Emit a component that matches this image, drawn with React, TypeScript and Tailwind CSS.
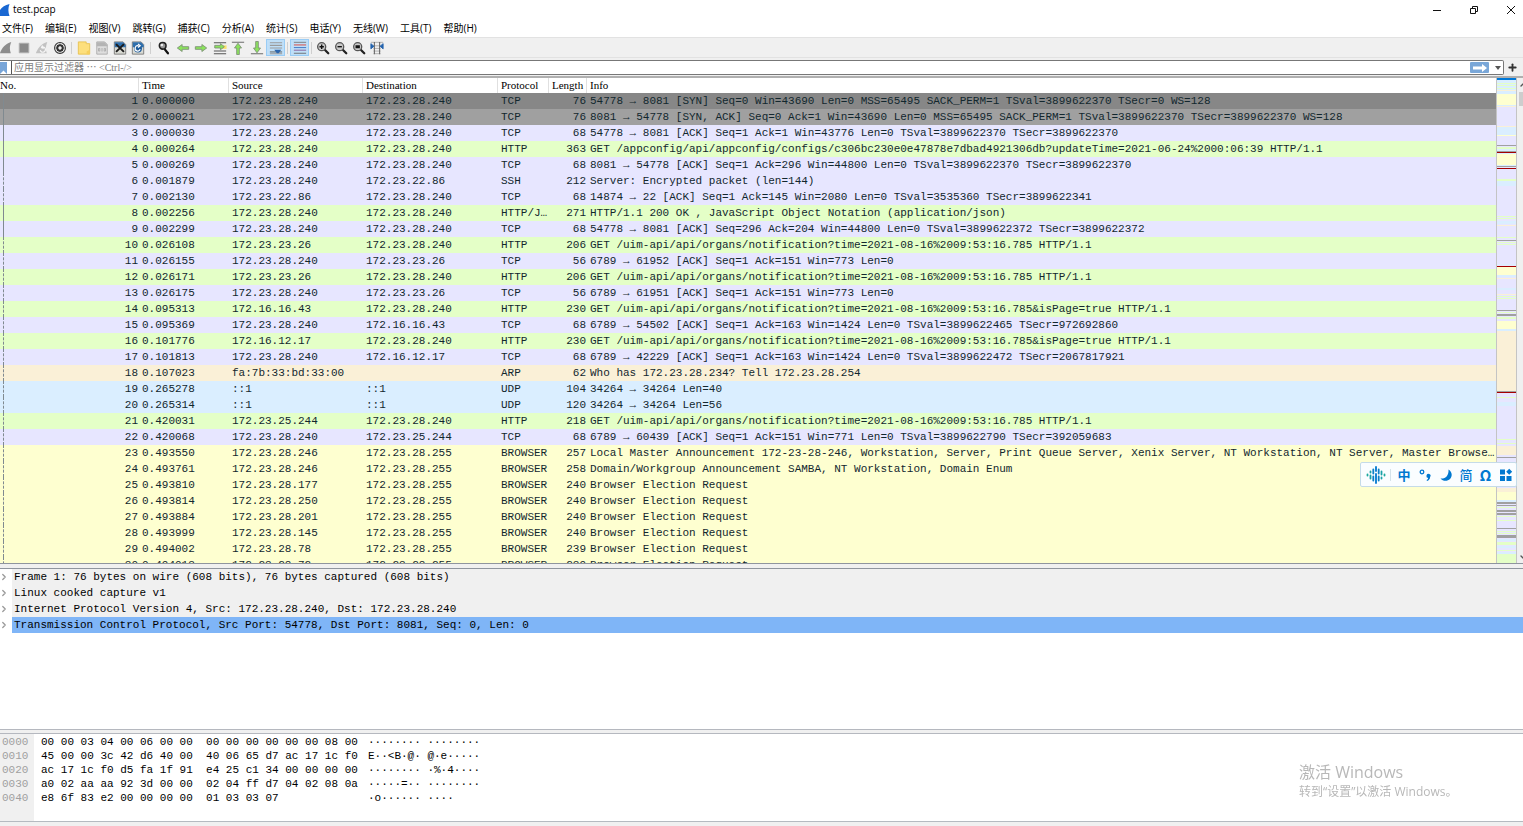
import type { ReactNode } from "react";
import { ChevronDown, ChevronRight, ChevronUp, Plus } from "lucide-react";

const MENUS = [
  "文件(F)",
  "编辑(E)",
  "视图(V)",
  "跳转(G)",
  "捕获(C)",
  "分析(A)",
  "统计(S)",
  "电话(Y)",
  "无线(W)",
  "工具(T)",
  "帮助(H)",
];

const ROW_BG = {
  selected: "bg-[#878787]",
  syn: "bg-[#a0a0a0]",
  tcp: "bg-[#e7e6ff]",
  http: "bg-[#e4ffc7]",
  arp: "bg-[#faf0d7]",
  udp: "bg-[#daeeff]",
  smb: "bg-[#feffd0]",
};

type Kind = keyof typeof ROW_BG;
type Packet = [Kind, string, string, string, string, number, string];

const PACKETS: Packet[] = [
  ["selected", "0.000000", "172.23.28.240", "172.23.28.240", "TCP", 76, "54778 → 8081 [SYN] Seq=0 Win=43690 Len=0 MSS=65495 SACK_PERM=1 TSval=3899622370 TSecr=0 WS=128"],
  ["syn", "0.000021", "172.23.28.240", "172.23.28.240", "TCP", 76, "8081 → 54778 [SYN, ACK] Seq=0 Ack=1 Win=43690 Len=0 MSS=65495 SACK_PERM=1 TSval=3899622370 TSecr=3899622370 WS=128"],
  ["tcp", "0.000030", "172.23.28.240", "172.23.28.240", "TCP", 68, "54778 → 8081 [ACK] Seq=1 Ack=1 Win=43776 Len=0 TSval=3899622370 TSecr=3899622370"],
  ["http", "0.000264", "172.23.28.240", "172.23.28.240", "HTTP", 363, "GET /appconfig/api/appconfig/configs/c306bc230e0e47878e7dbad4921306db?updateTime=2021-06-24%2000:06:39 HTTP/1.1"],
  ["tcp", "0.000269", "172.23.28.240", "172.23.28.240", "TCP", 68, "8081 → 54778 [ACK] Seq=1 Ack=296 Win=44800 Len=0 TSval=3899622370 TSecr=3899622370"],
  ["tcp", "0.001879", "172.23.28.240", "172.23.22.86", "SSH", 212, "Server: Encrypted packet (len=144)"],
  ["tcp", "0.002130", "172.23.22.86", "172.23.28.240", "TCP", 68, "14874 → 22 [ACK] Seq=1 Ack=145 Win=2080 Len=0 TSval=3535360 TSecr=3899622341"],
  ["http", "0.002256", "172.23.28.240", "172.23.28.240", "HTTP/J…", 271, "HTTP/1.1 200 OK , JavaScript Object Notation (application/json)"],
  ["tcp", "0.002299", "172.23.28.240", "172.23.28.240", "TCP", 68, "54778 → 8081 [ACK] Seq=296 Ack=204 Win=44800 Len=0 TSval=3899622372 TSecr=3899622372"],
  ["http", "0.026108", "172.23.23.26", "172.23.28.240", "HTTP", 206, "GET /uim-api/api/organs/notification?time=2021-08-16%2009:53:16.785 HTTP/1.1"],
  ["tcp", "0.026155", "172.23.28.240", "172.23.23.26", "TCP", 56, "6789 → 61952 [ACK] Seq=1 Ack=151 Win=773 Len=0"],
  ["http", "0.026171", "172.23.23.26", "172.23.28.240", "HTTP", 206, "GET /uim-api/api/organs/notification?time=2021-08-16%2009:53:16.785 HTTP/1.1"],
  ["tcp", "0.026175", "172.23.28.240", "172.23.23.26", "TCP", 56, "6789 → 61951 [ACK] Seq=1 Ack=151 Win=773 Len=0"],
  ["http", "0.095313", "172.16.16.43", "172.23.28.240", "HTTP", 230, "GET /uim-api/api/organs/notification?time=2021-08-16%2009:53:16.785&isPage=true HTTP/1.1"],
  ["tcp", "0.095369", "172.23.28.240", "172.16.16.43", "TCP", 68, "6789 → 54502 [ACK] Seq=1 Ack=163 Win=1424 Len=0 TSval=3899622465 TSecr=972692860"],
  ["http", "0.101776", "172.16.12.17", "172.23.28.240", "HTTP", 230, "GET /uim-api/api/organs/notification?time=2021-08-16%2009:53:16.785&isPage=true HTTP/1.1"],
  ["tcp", "0.101813", "172.23.28.240", "172.16.12.17", "TCP", 68, "6789 → 42229 [ACK] Seq=1 Ack=163 Win=1424 Len=0 TSval=3899622472 TSecr=2067817921"],
  ["arp", "0.107023", "fa:7b:33:bd:33:00", "", "ARP", 62, "Who has 172.23.28.234? Tell 172.23.28.254"],
  ["udp", "0.265278", "::1", "::1", "UDP", 104, "34264 → 34264 Len=40"],
  ["udp", "0.265314", "::1", "::1", "UDP", 120, "34264 → 34264 Len=56"],
  ["http", "0.420031", "172.23.25.244", "172.23.28.240", "HTTP", 218, "GET /uim-api/api/organs/notification?time=2021-08-16%2009:53:16.785 HTTP/1.1"],
  ["tcp", "0.420068", "172.23.28.240", "172.23.25.244", "TCP", 68, "6789 → 60439 [ACK] Seq=1 Ack=151 Win=771 Len=0 TSval=3899622790 TSecr=392059683"],
  ["smb", "0.493550", "172.23.28.246", "172.23.28.255", "BROWSER", 257, "Local Master Announcement 172-23-28-246, Workstation, Server, Print Queue Server, Xenix Server, NT Workstation, NT Server, Master Browser, D…"],
  ["smb", "0.493761", "172.23.28.246", "172.23.28.255", "BROWSER", 258, "Domain/Workgroup Announcement SAMBA, NT Workstation, Domain Enum"],
  ["smb", "0.493810", "172.23.28.177", "172.23.28.255", "BROWSER", 240, "Browser Election Request"],
  ["smb", "0.493814", "172.23.28.250", "172.23.28.255", "BROWSER", 240, "Browser Election Request"],
  ["smb", "0.493884", "172.23.28.201", "172.23.28.255", "BROWSER", 240, "Browser Election Request"],
  ["smb", "0.493999", "172.23.28.145", "172.23.28.255", "BROWSER", 240, "Browser Election Request"],
  ["smb", "0.494002", "172.23.28.78", "172.23.28.255", "BROWSER", 239, "Browser Election Request"],
  ["smb", "0.494013", "172.23.28.72", "172.23.28.255", "BROWSER", 239, "Browser Election Request"],
];

// packets that belong to the selected conversation get a solid guide line
const isRelated = (no: number) => no <= 5 || no === 8 || no === 9;

const DETAILS = [
  "Frame 1: 76 bytes on wire (608 bits), 76 bytes captured (608 bits)",
  "Linux cooked capture v1",
  "Internet Protocol Version 4, Src: 172.23.28.240, Dst: 172.23.28.240",
  "Transmission Control Protocol, Src Port: 54778, Dst Port: 8081, Seq: 0, Len: 0",
];

const HEX = [
  ["0000", "00 00 03 04 00 06 00 00  00 00 00 00 00 00 08 00", "········ ········"],
  ["0010", "45 00 00 3c 42 d6 40 00  40 06 65 d7 ac 17 1c f0", "E··<B·@· @·e·····"],
  ["0020", "ac 17 1c f0 d5 fa 1f 91  e4 25 c1 34 00 00 00 00", "········ ·%·4····"],
  ["0030", "a0 02 aa aa 92 3d 00 00  02 04 ff d7 04 02 08 0a", "·····=·· ········"],
  ["0040", "e8 6f 83 e2 00 00 00 00  01 03 03 07", "·o······ ····"],
];

const GREEN = "#e4ffc7";
const BLUE = "#daeeff";
const YELLOW = "#feffd0";
const PEACH = "#faf0d7";
const GRAY = "#a0a0a0";
const RED = "#a40000";

// [y, height, colour] on the lavender base of the overview bar
const STRIPES: [number, number, string][] = [
  [0, 2, "#0078d7"], [2, 14, BLUE], [5, 1, GREEN], [7, 1, GREEN], [10, 1, GREEN], [12, 1, PEACH],
  [16, 11, YELLOW], [27, 1, BLUE], [28, 1, PEACH], [48, 1, PEACH], [49, 8, BLUE], [57, 1, YELLOW],
  [67, 1, GRAY], [69, 2, GREEN], [71, 2, BLUE], [73, 1, GRAY], [74, 1, RED], [75, 1, BLUE],
  [76, 11, YELLOW], [87, 1, BLUE], [88, 1, GRAY], [90, 1, RED], [101, 2, GREEN], [103, 5, BLUE],
  [138, 1, GREEN], [140, 1, GREEN], [143, 3, BLUE], [147, 1, PEACH], [159, 1, GREEN], [162, 1, GRAY],
  [164, 1, GREEN], [166, 1, GREEN], [186, 1, BLUE], [188, 1, RED], [189, 8, YELLOW], [197, 2, BLUE],
  [200, 1, PEACH], [210, 2, BLUE], [216, 1, PEACH], [218, 1, GREEN], [220, 1, GREEN], [232, 1, GRAY],
  [234, 1, GREEN], [236, 2, GRAY], [239, 2, GREEN], [243, 8, YELLOW], [251, 2, BLUE], [253, 60, PEACH],
  [313, 1, GRAY], [314, 1, RED], [319, 1, GREEN], [324, 4, BLUE], [361, 1, GREEN], [365, 1, GREEN],
  [368, 9, PEACH], [379, 1, GRAY], [384, 25, BLUE], [410, 4, PEACH], [414, 8, YELLOW], [422, 2, BLUE],
  [424, 2, GRAY], [427, 1, GRAY], [429, 1, GREEN], [432, 2, GRAY], [435, 2, GRAY],
  [438, 1, GREEN], [442, 1, GREEN], [450, 1, GRAY], [453, 1, GREEN], [455, 1, GREEN], [457, 3, GRAY],
  [461, 2, BLUE], [464, 3, GREEN], [468, 2, BLUE], [472, 1, GREEN], [474, 2, BLUE], [476, 9, GREEN],
];

function Icon({ children }: { children: ReactNode }) {
  return (
    <svg viewBox="0 0 16 16" className="block h-[14px] w-[14px] shrink-0" fill="none">
      {children}
    </svg>
  );
}

function Lens({ children }: { children?: ReactNode }) {
  return (
    <Icon>
      <path d="M10 10l4 4" stroke="#222" strokeWidth="2.6" strokeLinecap="round" />
      <circle cx="6.5" cy="6.5" r="4.6" fill="#c9c9c9" stroke="#555" strokeWidth="1.5" />
      <g stroke="#111" strokeWidth="1.6">{children}</g>
    </Icon>
  );
}

function Arrow({ turn }: { turn?: string }) {
  return (
    <path
      d="M1.5 8L7 4v2.5h7.5v3H7V12z"
      fill="#8be35c"
      stroke="#7d8f76"
      strokeWidth="1"
      transform={turn}
    />
  );
}

function Doc({ children }: { children: ReactNode }) {
  return (
    <Icon>
      <path d="M1.5 1h10l3 3v11h-13z" fill="#d9dad3" stroke="#777" />
      <path d="M2 1.5h9.5l3 3V7H2z" fill="#2f6fad" />
      {children}
    </Icon>
  );
}

function ToolButton({ label, active, children }: { label: string; active?: boolean; children: ReactNode }) {
  return (
    <button
      aria-label={label}
      className={
        active
          ? "flex h-[17px] w-[19px] items-center justify-center border border-[#99ccf5] bg-[#bfdff8]"
          : "flex h-[17px] w-[18px] items-center justify-center"
      }
    >
      {children}
    </button>
  );
}

function Separator() {
  return <span className="h-3 w-px bg-[#cfcfcf]" />;
}

function Toolbar() {
  return (
    <div className="flex h-[21px] shrink-0 items-center border-y border-[#e2e2e2] bg-[#f0f0f0]">
      <div className="-ml-[3px] mr-[2px] flex">
        <ToolButton label="开始">
          <Icon><path d="M1 14C3 8 7 3 14 1c-2 5-2 9-.5 13z" fill="#8c8c8c" /></Icon>
        </ToolButton>
        <ToolButton label="停止">
          <Icon><path d="M2.5 2.5h11v11h-11z" fill="#8a8a8a" stroke="#b5b5b5" /></Icon>
        </ToolButton>
        <ToolButton label="重新开始">
          <Icon>
            <path d="M1 14C3 8 7 3 14 1c-2 5-2 9-.5 13z" fill="#c2c2c2" />
            <path d="M6 10.5a3 3 0 1 0 2-3.5M8.5 5L7.5 7.5l2.5 1" stroke="#f5f5f5" strokeWidth="1.4" />
          </Icon>
        </ToolButton>
        <ToolButton label="捕获选项">
          <Icon>
            <circle cx="8" cy="8" r="6.2" fill="#eee" stroke="#333" strokeWidth="1.2" />
            <circle cx="8" cy="8" r="3.2" stroke="#333" strokeWidth="2" />
            <path d="M8 3v10M3 8h10M4.5 4.5l7 7M11.5 4.5l-7 7" stroke="#333" />
            <circle cx="8" cy="8" r="1.6" fill="#eee" />
          </Icon>
        </ToolButton>
      </div>
      <Separator />
      <div className="mx-[3px] flex">
        <ToolButton label="打开">
          <Icon>
            <path d="M1.5 1h9v2h4v12h-13z" fill="#fddf7c" stroke="#e8c14e" />
            <path d="M11 12l3.500-2v5H11z" fill="#f7cf5c" />
          </Icon>
        </ToolButton>
        <ToolButton label="保存">
          <Icon>
            <path d="M2 1h9l3 3v11H2z" fill="#dedede" stroke="#aaa" />
            <path d="M2 1.5h9l3 3V6H2z" fill="#b4b4b4" />
            <path d="M4 8.5h1.5v3H4zM8 8v4M10.5 8.5H12v3h-1.5z" stroke="#aaa" />
          </Icon>
        </ToolButton>
        <ToolButton label="关闭">
          <Doc><path d="M3.5 3.5l9 9M12.5 3.5l-9 9" stroke="#1c1c1c" strokeWidth="2.2" /></Doc>
        </ToolButton>
        <ToolButton label="重新加载">
          <Doc>
            <circle cx="8" cy="8.5" r="4.5" fill="#1e5c9c" />
            <path d="M10.5 9.5A3 3 0 1 1 8.5 5.5M8 3.5l2.5 2L8 7.500" stroke="#fff" strokeWidth="1.4" />
          </Doc>
        </ToolButton>
      </div>
      <Separator />
      <div className="mr-[2px] ml-[4px] flex w-[130px] justify-between">
        <ToolButton label="查找">
          <Icon>
            <path d="M8.5 9l4 5" stroke="#111" strokeWidth="2.6" strokeLinecap="round" />
            <circle cx="6.5" cy="5.5" r="3.8" fill="#999" stroke="#222" strokeWidth="1.8" />
            <circle cx="5.5" cy="4.5" r="1.5" fill="#eee" />
          </Icon>
        </ToolButton>
        <ToolButton label="后退"><Icon><Arrow /></Icon></ToolButton>
        <ToolButton label="前进"><Icon><Arrow turn="rotate(180 8 8)" /></Icon></ToolButton>
        <ToolButton label="转到分组">
          <Icon>
            <path d="M1 2h14M1 11.5h14M1 14.5h14" stroke="#555" strokeWidth="1.2" />
            <path d="M10 5h5.5v4H10z" fill="#f8e26c" />
            <path d="M13 6.5L8.5 3v2H2v3h6.5v2z" fill="#8be35c" stroke="#7d8f76" />
          </Icon>
        </ToolButton>
        <ToolButton label="首个分组">
          <Icon>
            <path d="M1 1.5h14" stroke="#8a8a8a" strokeWidth="1.5" />
            <Arrow turn="translate(0 1) rotate(90 8 8)" />
          </Icon>
        </ToolButton>
        <ToolButton label="末个分组">
          <Icon>
            <Arrow turn="translate(0 -1) rotate(270 8 8)" />
            <path d="M1 14.5h14" stroke="#8a8a8a" strokeWidth="1.5" />
          </Icon>
        </ToolButton>
        <ToolButton label="自动滚动" active>
          <Icon>
            <path d="M1 2h14M1 5h14M1 8h14M1 14.5h14" stroke="#9a9a9a" strokeWidth="1.2" />
            <path d="M1 12.5h14" stroke="#555" />
            <path d="M6 10h8l-3 4H9z" fill="#2c66ad" />
          </Icon>
        </ToolButton>
      </div>
      <Separator />
      <div className="mx-[2px] flex">
        <ToolButton label="着色" active>
          <Icon>
            <path d="M1 1.5h14" stroke="#777" />
            <path d="M1 4.5h14" stroke="#d9534f" strokeWidth="1.2" />
            <path d="M1 7.5h14" stroke="#4a7fc8" strokeWidth="1.2" />
            <path d="M1 10.5h14" stroke="#8e6aa5" strokeWidth="1.2" />
            <path d="M1 14h14" stroke="#666" />
          </Icon>
        </ToolButton>
      </div>
      <Separator />
      <div className="ml-[2px] flex">
        <ToolButton label="放大"><Lens><path d="M4 6.5h5M6.5 4v5" /></Lens></ToolButton>
        <ToolButton label="缩小"><Lens><path d="M4 6.5h5" /></Lens></ToolButton>
        <ToolButton label="正常大小"><Lens><path d="M4 5.7h5M4 7.4h5" /></Lens></ToolButton>
        <ToolButton label="调整列宽">
          <Icon>
            <path d="M1 1.5h14M4 5.5h8M4 8.5h8M4 11.5h8M4 14.5h8" stroke="#aaa" />
            <path d="M5 1v14M11 1v14" stroke="#666" strokeWidth="1.2" />
            <path d="M1 3v6l3.5-3zM15 3v6l-3.5-3z" fill="#2463ad" stroke="#2463ad" />
          </Icon>
        </ToolButton>
      </div>
    </div>
  );
}

function FilterBar() {
  return (
    <div className="flex h-[18px] shrink-0 items-center bg-[#f0f0f0] pt-[1px]">
      <div className="flex h-[15px] flex-1 items-center rounded-r-[2px] border border-l-0 border-[#777] bg-white">
        <button aria-label="书签" className="flex h-full w-[11px] shrink-0 items-center">
          <svg viewBox="0 0 8 12" className="block h-3 w-2">
            <path d="M0 0h7v12L3.5 8.5 0 12z" fill="#78a5d8" />
          </svg>
        </button>
        <input
          aria-label="显示过滤器"
          placeholder="应用显示过滤器 ⋯ <Ctrl-/>"
          className="h-full min-w-0 flex-1 border-l border-[#555] pl-[2px] font-['Liberation_Serif','Noto_Sans_CJK_SC',serif] text-[10px] outline-none placeholder:text-[#808080]"
        />
        <button aria-label="应用" className="flex h-[11px] w-[19px] items-center justify-center rounded-[1px] bg-[#7aa7d8]">
          <svg viewBox="0 0 14 8" className="block h-2 w-[14px]">
            <path d="M0 2.5h9V0l5 4-5 4V5.5H0z" fill="#fff" />
          </svg>
        </button>
        <button aria-label="历史" className="flex w-[14px] justify-center pl-[3px]">
          <svg viewBox="0 0 6 4" className="block h-1 w-[6px]">
            <path d="M0 0h6L3 4z" fill="#555" />
          </svg>
        </button>
      </div>
      <button aria-label="添加" className="flex w-[19px] justify-start pl-[3px] text-[#333]">
        <Plus size={11} strokeWidth={4} />
      </button>
    </div>
  );
}

function PacketTable() {
  const cell = "truncate p-0 pl-[3px]";
  const head = "border-r border-[#e0e0e0] p-0 pl-[3px] text-left font-normal";
  return (
    <table className="w-full table-fixed border-separate border-spacing-0 text-[11px] leading-4 text-[#12272e]">
      <colgroup>
        <col className="w-[139px]" />
        <col className="w-[90px]" />
        <col className="w-[134px]" />
        <col className="w-[135px]" />
        <col className="w-[51px]" />
        <col className="w-[38px]" />
        <col />
      </colgroup>
      <thead className="bg-white font-['Liberation_Serif',serif] text-[11px] leading-[15px] text-black">
        <tr>
          <th className="border-r border-[#e0e0e0] p-0 text-left font-normal">No.</th>
          <th className={head}>Time</th>
          <th className={head}>Source</th>
          <th className={head}>Destination</th>
          <th className={head}>Protocol</th>
          <th className={head}>Length</th>
          <th className="p-0 pl-[3px] text-left font-normal">Info</th>
        </tr>
      </thead>
      <tbody>
        {PACKETS.map(([kind, time, src, dst, proto, len, info], i) => (
          <tr key={i} className={ROW_BG[kind]}>
            <td className="p-0">
              <div className="flex h-4 justify-between pr-px pl-[3px]">
                <span className={isRelated(i + 1) ? "border-l border-[#808a90]" : "border-l border-dashed border-[#808a90]"} />
                {i + 1}
              </div>
            </td>
            <td className={cell}>{time}</td>
            <td className={cell}>{src}</td>
            <td className={cell}>{dst}</td>
            <td className="p-0 pl-[3px] whitespace-nowrap">{proto}</td>
            <td className="p-0 pr-px text-right">{len}</td>
            <td className={cell}>{info}</td>
          </tr>
        ))}
      </tbody>
    </table>
  );
}

function ImeBar() {
  return (
    <div className="fixed top-[462px] right-[6px] flex h-[25px] w-[157px] items-center rounded-[2px] border border-[#c5dbe8] bg-[#fafdff] pl-[5px] font-['Noto_Sans_CJK_SC',sans-serif] text-[13px] font-bold text-[#0078d0]">
      <svg viewBox="0 0 20 18" className="mr-[4px] block h-[18px] w-5" strokeWidth="1.8" strokeLinecap="round">
        <path d="M1.5 8.500v1M18.500 8.500v1" stroke="#1aa89c" />
        <path d="M4.500 5.500v1M4.500 9.500v3M15.500 5.500v3M15.500 11.500v1" stroke="#1aa0a8" />
        <path d="M7.300 3.500v4M7.300 10.500v4M12.700 3.500v4M12.700 10.500v4" stroke="#0a80c8" />
        <path d="M10 1v4M10 8v9" stroke="#0078d0" />
      </svg>
      <span className="h-3 w-px bg-[#d5e2ea]" />
      <div className="flex flex-1 items-center justify-around pl-[3px]">
        <button className="leading-4">中</button>
        <svg viewBox="0 0 14 14" className="block h-[14px] w-[14px]">
          <circle cx="4" cy="4" r="1.8" fill="none" stroke="#0078d0" strokeWidth="1.3" />
          <path d="M8.5 7.5a2 2 0 1 1 3.6 1.5c0 2-1.3 3.5-3.1 4l-.4-1c1-.5 1.5-1.1 1.5-2a2 2 0 0 1-1.6-2.500z" fill="#0078d0" />
        </svg>
        <svg viewBox="0 0 14 14" className="block h-[14px] w-[14px]">
          <path d="M9.5 1.5c4 2.5 4 7 1.5 9.500s-7 2.500-9.500-.5c5 .5 8.500-3 8-9z" fill="#0078d0" />
        </svg>
        <button className="leading-4 font-medium">简</button>
        <button className="text-[15px] leading-4">Ω</button>
        <svg viewBox="0 0 14 14" className="block h-[14px] w-[14px]" fill="#0078d0">
          <path d="M1 1.5h5v5H1zM1 8h5v5H1zM7.5 8h5v5h-5zM10.2.8l3 3-3 3-3-3z" />
        </svg>
      </div>
    </div>
  );
}

export default function App() {
  return (
    <div className="flex h-screen flex-col overflow-hidden bg-white font-['Open_Sans','Noto_Sans_CJK_SC',sans-serif] text-[10px] text-black">
      <header className="flex h-[19px] shrink-0 items-center">
        <svg viewBox="0 0 10 12" className="block h-3 w-[10px]">
          <path d="M0 12V6C2 3 5 1 9.500 0c-1.500 4-1.500 8 0 12z" fill="#1967d2" />
        </svg>
        <h1 className="flex-1 pl-[3px]">test.pcap</h1>
        <div className="flex h-4 items-center gap-[27px] pr-[7px]">
          <button aria-label="最小化">
            <svg viewBox="0 0 10 10" className="block h-[10px] w-[10px]"><path d="M1 5.5h8" stroke="#111" /></svg>
          </button>
          <button aria-label="还原">
            <svg viewBox="0 0 10 10" className="block h-[10px] w-[10px]" fill="none" stroke="#111">
              <path d="M1.5 3.5h5v5h-5zM3.5 3V1.5h5v5H7" />
            </svg>
          </button>
          <button aria-label="关闭窗口">
            <svg viewBox="0 0 10 10" className="block h-[10px] w-[10px]"><path d="M1 1l8 8M9 1l-8 8" stroke="#111" /></svg>
          </button>
        </div>
      </header>
      <nav className="flex h-[18px] shrink-0 items-center gap-3 pl-[2px]">
        {MENUS.map((m) => (
          <button key={m} className="whitespace-nowrap">{m}</button>
        ))}
      </nav>
      <Toolbar />
      <FilterBar />

      <main className="flex min-h-0 flex-1 flex-col font-['Liberation_Mono',monospace] text-[11px]">
        <section className="flex min-h-0 flex-[485] border-t-2 border-[#b0b0b0]">
          <div className="min-w-0 flex-1 overflow-hidden">
            <PacketTable />
          </div>
          <svg
            viewBox="0 0 20 485"
            preserveAspectRatio="none"
            shapeRendering="crispEdges"
            className="block h-full w-[21px] shrink-0 border-x border-[#c4c4c4] bg-[#e7e6ff]"
          >
            {STRIPES.map(([y, h, fill]) => (
              <rect key={y} x="0" y={y} width="20" height={h} fill={fill} />
            ))}
          </svg>
          <div className="flex w-[6px] shrink-0 flex-col items-start overflow-hidden bg-[#f0f0f0] pl-[2px] text-[#555]">
            <ChevronUp size={8} strokeWidth={4} className="my-[3px] shrink-0" />
            <span className="h-[14px] w-full bg-[#cdcdcd]" />
            <ChevronDown size={8} strokeWidth={4} className="mt-auto mb-[2px] shrink-0" />
          </div>
        </section>
        <div className="h-[6px] shrink-0 border-y border-[#8f959e] bg-[#f0f0f0]" />

        <section className="min-h-0 flex-[160] overflow-hidden bg-white">
          <ul>
            {DETAILS.map((d, i) => (
              <li key={d} className="flex h-4 items-center leading-4">
                <button aria-label="展开" className="flex w-3 shrink-0 text-[#999]">
                  <ChevronRight size={10} strokeWidth={3} className="-ml-px" />
                </button>
                <span className={i === 3 ? "flex-1 bg-[#7fb5f7] pl-[2px]" : "flex-1 bg-[#f0f0f0] pl-[2px]"}>{d}</span>
              </li>
            ))}
          </ul>
        </section>
        <div className="h-[5px] shrink-0 border-y border-[#b5b8bf] bg-[#f0f0f0]" />

        <section className="flex min-h-0 flex-[87] overflow-hidden bg-white leading-[14px] whitespace-pre">
          <div className="w-[34px] shrink-0 bg-[#f0f0f0] pt-[1px] pl-[2px] text-[#a0a0a0]">
            {HEX.map(([offset]) => (
              <div key={offset}>{offset}</div>
            ))}
          </div>
          <div className="w-[334px] shrink-0 pt-[1px] pl-[7px]">
            {HEX.map(([offset, bytes]) => (
              <div key={offset}>{bytes}</div>
            ))}
          </div>
          <div className="pt-[1px]">
            {HEX.map(([offset, , ascii]) => (
              <div key={offset}>{ascii}</div>
            ))}
          </div>
        </section>
      </main>
      <footer className="h-[5px] shrink-0 border-t border-[#b5bac0] bg-[#f0f0f0]" />

      <ImeBar />
      <div className="pointer-events-none fixed right-[64px] bottom-[25px] w-[160px] font-['Open_Sans','Noto_Sans_CJK_SC',sans-serif] whitespace-nowrap text-[#b8b8b8]">
        <p className="text-[16px] leading-[22px]">激活 Windows</p>
        <p className="text-[12px] leading-[18px]">转到“设置”以激活 Windows。</p>
      </div>
    </div>
  );
}
